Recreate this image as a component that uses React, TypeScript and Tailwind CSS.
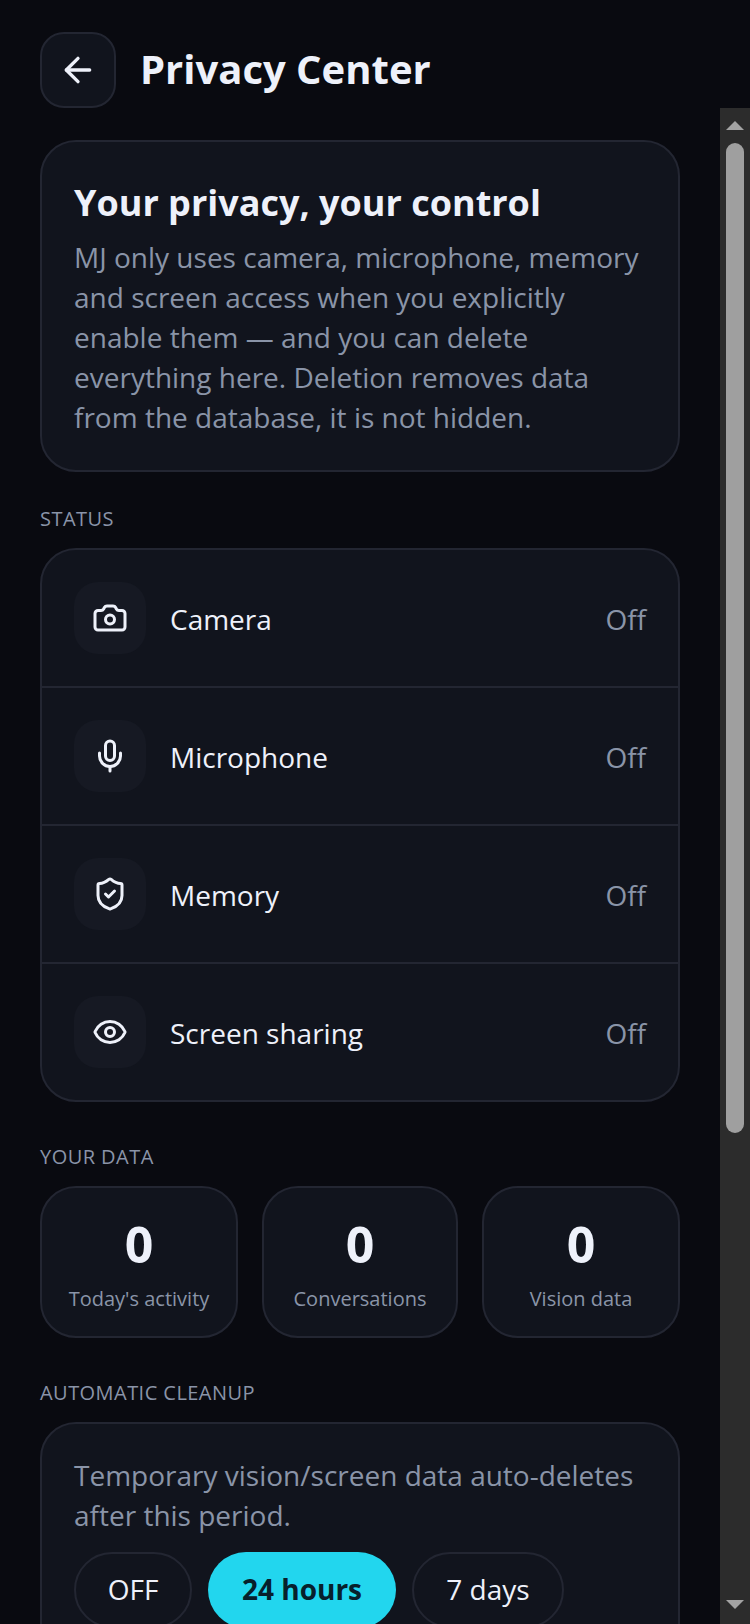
import React from 'react';
import { ArrowLeft, Camera, Eye, Mic, ShieldCheck } from 'lucide-react';

const statusRows = [
  { label: 'Camera', icon: Camera },
  { label: 'Microphone', icon: Mic },
  { label: 'Memory', icon: ShieldCheck },
  { label: 'Screen sharing', icon: Eye },
];

const stats = ["Today's activity", 'Conversations', 'Vision data'];

const SectionLabel = ({ children, className }: { children: React.ReactNode; className: string }) => (
  <h3 className={`text-[20px] leading-[28px] uppercase tracking-[0.45px] text-[#8a94a8] ${className}`}>{children}</h3>
);

const App: React.FC = () => {
  return (
    <div className="h-[1624px] w-[750px] overflow-hidden flex flex-col bg-[#090a10] font-['Open_Sans',sans-serif] text-[#eef1fa]">
      {/* header */}
      <header className="h-[108px] shrink-0 flex items-start gap-[24px] pl-[40px] pt-[32px]">
        <button className="w-[76px] h-[76px] rounded-[24px] border-2 border-[#232632] bg-[#11141d] flex items-center justify-center">
          <ArrowLeft size={40} />
        </button>
        <h1 className="text-[40px] leading-[74px] font-bold">Privacy Center</h1>
      </header>

      <div className="flex flex-1 min-h-0">
        <main className="flex-1 min-w-0 overflow-hidden px-[40px] pt-[32px]">
          <section className="rounded-[36px] border-2 border-[#232632] bg-[#11141d] px-[32px] pt-[32px] pb-[33px]">
            <h2 className="text-[36px] leading-[58px] font-bold mb-[5px]">Your privacy, your control</h2>
            <p className="text-[28px] leading-[40px] text-[#8a94a8]">
              MJ only uses camera, microphone, memory and screen access when you explicitly enable them — and you can delete everything here. Deletion removes data from the database, it is not hidden.
            </p>
          </section>

          <SectionLabel className="mt-[33px] mb-[15px]">Status</SectionLabel>
          <section className="rounded-[36px] border-2 border-[#232632] bg-[#11141d]">
            {statusRows.map((row, idx) => (
              <div
                key={row.label}
                className={`flex items-center gap-[24px] p-[32px] ${idx < statusRows.length - 1 ? 'border-b-2 border-[#232632] h-[138px]' : 'h-[136px]'}`}
              >
                <div className="w-[72px] h-[72px] rounded-[24px] bg-[#161923] flex items-center justify-center">
                  <row.icon size={36} />
                </div>
                <span className="flex-1 pt-[2px] text-[28px] leading-[40px]">{row.label}</span>
                <span className="pt-[2px] text-[28px] leading-[40px] text-[#8a94a8]">Off</span>
              </div>
            ))}
          </section>

          <SectionLabel className="mt-[41px] mb-[15px]">Your data</SectionLabel>
          <section className="grid grid-cols-[198px_196px_198px] gap-[24px]">
            {stats.map((label) => (
              <div key={label} className="h-[152px] rounded-[36px] border-2 border-[#232632] bg-[#11141d] flex flex-col items-center pt-[26px]">
                <span className="text-[50px] leading-[60px] font-bold">0</span>
                <span className="mt-[11px] text-[20px] leading-[28px] text-[#8a94a8]">{label}</span>
              </div>
            ))}
          </section>

          <SectionLabel className="mt-[41px] mb-[15px]">Automatic cleanup</SectionLabel>
          <section className="rounded-[36px] border-2 border-[#232632] bg-[#11141d] px-[32px] pt-[31px] pb-[32px]">
            <p className="text-[28px] leading-[40px] text-[#8a94a8]">Temporary vision/screen data auto-deletes after this period.</p>
            <div className="mt-[17px] flex gap-[16px]">
              <button className="h-[76px] w-[118px] pb-[2px] rounded-full border-2 border-[#232632] text-[28px]">OFF</button>
              <button className="h-[76px] w-[188px] pb-[2px] rounded-full bg-[#22d6ee] text-[28px] font-bold text-[#07202b]">24 hours</button>
              <button className="h-[76px] w-[152px] pb-[2px] rounded-full border-2 border-[#232632] text-[28px]">7 days</button>
            </div>
          </section>
        </main>

        {/* scrollbar as rendered in the screenshot */}
        <div className="w-[30px] shrink-0 bg-[#2c2c2c] flex flex-col items-center pt-[13px] pb-[15px]">
          <div className="w-0 h-0 border-x-[9px] border-x-transparent border-b-[9px] border-b-[#a3a3a3]" />
          <div className="mt-[13px] w-[18px] h-[990px] rounded-full bg-[#9f9f9f]" />
          <div className="mt-auto w-0 h-0 border-x-[9px] border-x-transparent border-t-[9px] border-t-[#a3a3a3]" />
        </div>
      </div>
    </div>
  );
};

export default App;
